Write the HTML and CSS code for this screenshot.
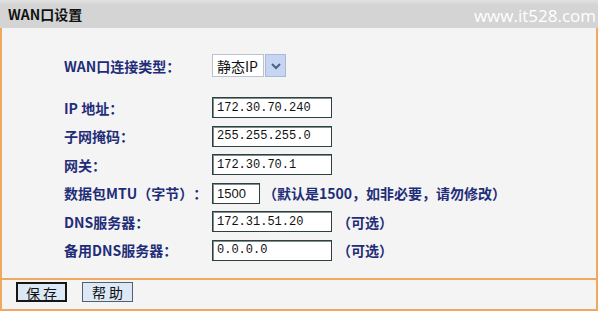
FILE: index.html
```html
<!DOCTYPE html>
<html lang="zh-CN">
<head>
    <meta charset="UTF-8">
    <title>WAN口设置</title>
    <link rel="stylesheet" href="styles.css">
</head>
<body>
    <div class="panel">
        <div class="head">
            <span class="title">WAN口设置</span>
            <span class="mark">www.it528.com</span>
        </div>

        <div class="body">
            <div class="row type-row">
                <span class="label">WAN口连接类型：</span>
                <div class="select">
                    <span class="select-text">静态IP</span>
                    <span class="arrow">
                        <svg width="12" height="8" viewBox="0 0 12 8"><path d="M2 2 L6 6 L10 2" fill="none" stroke="#4d6185" stroke-width="2"/></svg>
                    </span>
                </div>
            </div>

            <div class="fields">
                <span class="label">IP 地址：</span>
                <div class="field"><span class="input">172.30.70.240</span></div>

                <span class="label">子网掩码：</span>
                <div class="field"><span class="input">255.255.255.0</span></div>

                <span class="label">网关：</span>
                <div class="field"><span class="input">172.30.70.1</span></div>

                <span class="label">数据包MTU（字节）：</span>
                <div class="field"><span class="input short">1500</span><span class="hint">（默认是1500，如非必要，请勿修改）</span></div>

                <span class="label">DNS服务器：</span>
                <div class="field"><span class="input">172.31.51.20</span><span class="hint opt">（可选）</span></div>

                <span class="label">备用DNS服务器：</span>
                <div class="field"><span class="input">0.0.0.0</span><span class="hint opt">（可选）</span></div>
            </div>
        </div>

        <div class="foot">
            <button class="btn focused">保 存</button>
            <button class="btn">帮 助</button>
        </div>
    </div>
</body>
</html>
```

FILE: styles.css
```css
body {
    margin: 0;
    background: #ffffff;
    font-family: "Noto Sans CJK SC", sans-serif;
    text-spacing-trim: space-all;
}

.panel {
    width: 598px;
}

.head {
    height: 28px;
    background: linear-gradient(#e2e2e2, #d4d4d4 5px);
    display: flex;
    align-items: center;
    justify-content: space-between;
    padding: 0 2px 0 8px;
}

.title {
    font-size: 14px;
    font-weight: bold;
    color: #111;
}

.mark {
    font-family: "Open Sans", sans-serif;
    font-size: 17px;
    color: #ffffff;
    margin-top: 2px;
}

.body {
    background: #f4f4f4;
    border-left: 2px solid #f0a860;
    border-right: 2px solid #f0a860;
    border-bottom: 2px solid #f0a860;
    padding: 26px 0 17px 62px;
}

.label {
    font-size: 14px;
    font-weight: bold;
    color: #1f2d78;
}

.row {
    display: grid;
    grid-template-columns: 148px auto;
    align-items: center;
}

.type-row {
    margin-bottom: 20px;
}

.select {
    display: flex;
    width: 74px;
    height: 23px;
}

.select-text {
    flex: 1;
    background: #fff;
    border: 1px solid #b9c4d0;
    font-size: 14px;
    color: #111;
    display: flex;
    align-items: center;
    padding-left: 4px;
}

.arrow {
    width: 19px;
    margin-left: 1px;
    background: #c6d5f2;
    border: 1px solid #a9b9d8;
    display: flex;
    align-items: center;
    justify-content: center;
}

.fields {
    display: grid;
    grid-template-columns: 148px auto;
    grid-auto-rows: 21px;
    row-gap: 7.6px;
    align-items: center;
}

.field {
    display: flex;
    align-items: center;
    height: 21px;
}

.input {
    box-sizing: border-box;
    width: 120px;
    height: 21px;
    background: #fff;
    border: 1px solid #2e4040;
    box-shadow: inset 1px 1px 0 #7f8c8c;
    font-family: "Liberation Mono", monospace;
    font-size: 12px;
    color: #111;
    display: flex;
    align-items: center;
    padding-left: 4px;
}

.input.short {
    width: 48px;
    font-family: "Liberation Sans", sans-serif;
    font-size: 13px;
}

.hint {
    font-size: 14px;
    font-weight: bold;
    color: #1f2d78;
    margin-left: 3px;
}

.hint.opt {
    margin-left: 5px;
}

.foot {
    display: flex;
    gap: 15px;
    background: #f4f4f4;
    border-left: 2px solid #f0a860;
    border-right: 2px solid #f0a860;
    border-bottom: 2px solid #f0a860;
    padding: 2px 0 7px 14px;
}

.btn {
    box-sizing: border-box;
    width: 51px;
    height: 20px;
    padding: 0;
    background: #dce8f5;
    border: 1px solid #52606e;
    font-family: "Noto Sans CJK SC", sans-serif;
    font-size: 14px;
    line-height: 18px;
    color: #111;
}

.btn.focused {
    border: 2px solid #161616;
}
```
